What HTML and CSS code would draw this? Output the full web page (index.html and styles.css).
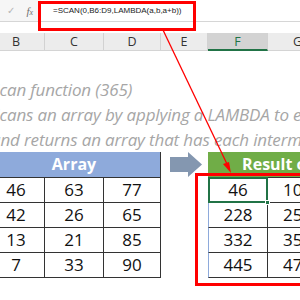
FILE: index.html
```html
<!DOCTYPE html>
<html>
<head>
<meta charset="utf-8">
<link rel="stylesheet" href="styles.css">
</head>
<body>
<div class="page">
  <div class="fbar">
    <div class="fbar-tools"><span class="ok">✓</span><span class="fx">f<span class="fx-x">x</span></span></div>
    <div class="fbar-input">=SCAN(0,B6:D9,LAMBDA(a,b,a+b))</div>
  </div>
  <div class="colhead">
    <div class="ch cb">B</div><div class="ch cc">C</div><div class="ch cd">D</div><div class="ch ce">E</div><div class="ch cf sel">F</div><div class="ch cg">G</div>
  </div>
  <div class="notes">
    <div class="note empty"></div>
    <div class="note">Scan function (365)</div>
    <div class="note">Scans an array by applying a LAMBDA to each value</div>
    <div class="note">and returns an array that has each intermediate value.</div>
  </div>
  <div class="row hrow">
    <div class="cell head-blue">Array</div>
    <div class="cell ce arrow-cell">
      <svg width="47" height="26" viewBox="0 0 47 26"><polygon points="9,5 27,5 27,0 41,12.5 27,25 27,20 9,20" fill="#8497b0"/></svg>
    </div>
    <div class="cell head-green">Result of SCAN</div>
  </div>
  <div class="row drow">
    <div class="cell cb a">46</div><div class="cell cc a">63</div><div class="cell cd a">77</div><div class="cell ce"></div><div class="cell cf r active">46</div><div class="cell cg r">109</div>
  </div>
  <div class="row drow">
    <div class="cell cb a">42</div><div class="cell cc a">26</div><div class="cell cd a">65</div><div class="cell ce"></div><div class="cell cf r">228</div><div class="cell cg r">254</div>
  </div>
  <div class="row drow">
    <div class="cell cb a">13</div><div class="cell cc a">21</div><div class="cell cd a">85</div><div class="cell ce"></div><div class="cell cf r">332</div><div class="cell cg r">353</div>
  </div>
  <div class="row drow">
    <div class="cell cb a">7</div><div class="cell cc a">33</div><div class="cell cd a">90</div><div class="cell ce"></div><div class="cell cf r">445</div><div class="cell cg r">478</div>
  </div>

  <div class="hl-formula"></div>
  <div class="hl-result"></div>
  <svg class="pointer" width="300" height="300" viewBox="0 0 300 300">
    <line x1="163" y1="30" x2="227" y2="164" stroke="#ff0000" stroke-width="1.3"/>
    <polygon points="231,173 223,164 229,162" fill="#ff0000"/>
  </svg>
</div>
</body>
</html>
```
FILE: styles.css
```css
html, body {
  margin: 0;
  padding: 0;
  background: #ffffff;
}
.page {
  position: relative;
  width: 300px;
  height: 300px;
  overflow: hidden;
  font-family: "Open Sans", "Liberation Sans", sans-serif;
}
.fbar {
  display: flex;
  height: 22px;
  border-bottom: 1px solid #d6d6d6;
  background: #f6f6f6;
  box-sizing: border-box;
}
.fbar-tools {
  width: 41px;
  display: flex;
  align-items: center;
  position: relative;
}
.ok {
  margin-left: 7px;
  color: #b5b5b5;
  font-size: 10px;
  font-family: "DejaVu Sans", sans-serif;
}
.fx {
  margin-left: 11px;
  font-family: "Liberation Serif", serif;
  font-style: italic;
  font-size: 11px;
  color: #6f6f6f;
}
.fx-x {
  font-size: 8px;
}
.fbar-input {
  flex: 1;
  background: #ffffff;
  display: flex;
  align-items: center;
  padding-left: 12px;
  font-family: "Liberation Sans", sans-serif;
  font-size: 8px;
  color: #222;
}
.colhead {
  display: flex;
  margin-top: 11px;
  height: 18px;
  margin-left: -12px;
  background: #ececec;
  border-bottom: 1px solid #d4d4d4;
  box-sizing: border-box;
}
.ch {
  box-sizing: border-box;
  border-right: 1px solid #d2d2d2;
  text-align: center;
  font-size: 12.5px;
  line-height: 17px;
  color: #333;
}
.ch.sel {
  background: #d3d3d3;
  color: #217346;
  border-bottom: 2px solid #217346;
  height: 18px;
}
.cb { width: 57px; flex: none; }
.cc { width: 59px; flex: none; }
.cd { width: 57px; flex: none; }
.ce { width: 47px; flex: none; }
.cf { width: 60px; flex: none; }
.cg { width: 60px; flex: none; }

.notes {
  margin-left: -9px;
}
.note {
  height: 25px;
  line-height: 25px;
  white-space: nowrap;
  font-style: italic;
  font-size: 17px;
  color: #a6a6a6;
  letter-spacing: -0.15px;
}
.note.empty {
  height: 26px;
}
.row {
  display: flex;
  margin-left: -12px;
}
.cell {
  box-sizing: border-box;
  text-align: center;
  font-size: 17px;
  color: #111;
}
.hrow {
  height: 26px;
}
.head-blue {
  width: 173px;
  flex: none;
  background: #8eaadb;
  color: #ffffff;
  font-weight: bold;
  font-size: 16px;
  line-height: 25px;
  border-bottom: 1px solid #333;
  border-right: 1px solid #333;
}
.arrow-cell {
  display: flex;
  align-items: center;
}
.head-green {
  width: 180px;
  flex: none;
  background: #70ad47;
  color: #ffffff;
  font-weight: bold;
  font-size: 16px;
  line-height: 25px;
  padding-left: 6px;
  border-bottom: 1px solid #333;
}
.drow {
  height: 25px;
}
.drow .cell {
  line-height: 24px;
}
.a {
  border-right: 1px solid #333;
  border-bottom: 1px solid #333;
}
.r {
  border-right: 1px solid #333;
  border-bottom: 1px solid #333;
}
.cf.r {
  border-left: 1px solid #8eaadb;
}
.active {
  position: relative;
}
.active::before {
  content: "";
  position: absolute;
  left: -1px;
  top: -1px;
  right: -1px;
  bottom: -1px;
  border: 2px solid #217346;
}
.active::after {
  content: "";
  position: absolute;
  right: -3px;
  bottom: -3px;
  width: 5px;
  height: 5px;
  background: #217346;
  border: 1px solid #fff;
  box-sizing: border-box;
}
.hl-formula {
  position: absolute;
  left: 38px;
  top: 1px;
  width: 158px;
  height: 30px;
  border: 3px solid #ff0000;
  box-sizing: border-box;
}
.hl-result {
  position: absolute;
  left: 195px;
  top: 173px;
  width: 120px;
  height: 113px;
  border: 3px solid #ff0000;
  box-sizing: border-box;
}
.pointer {
  position: absolute;
  left: 0;
  top: 0;
}
```
